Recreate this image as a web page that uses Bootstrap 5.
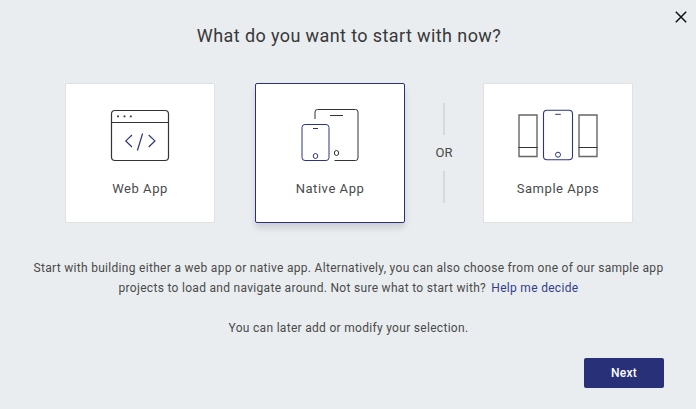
<!DOCTYPE html>
<html lang="en">
<head>
<meta charset="utf-8">
<meta name="viewport" content="width=device-width, initial-scale=1">
<title>Get started</title>
<link href="https://cdn.jsdelivr.net/npm/bootstrap@5.3.0/dist/css/bootstrap.min.css" rel="stylesheet">
<style>
body{background:#e9edf0;font-family:Roboto,sans-serif;color:#4a4a4a;height:409px;overflow:hidden}
.dialog-box{width:696px;height:409px}
.dialog-title{font-size:18px;line-height:24px;letter-spacing:.4px;font-weight:400;color:#383838;padding-top:24px;margin-bottom:35px;padding-left:2px}
.close-x{top:11px;right:9px;width:12px;height:12px}
.options{padding-left:65px}
.option{width:150px;height:140px;border:1px solid #e0e1e2;border-radius:2px;padding-top:24px}
.option.selected{border-color:#293178;box-shadow:0 5px 6px rgba(0,0,0,.12);margin-left:40px}
.option svg{width:84px;height:56px;fill:none;stroke:#333}
.option .accent{stroke:#2b3582}
.option span{font-size:13px;line-height:20px;letter-spacing:.55px;margin-top:15px}
.either{width:78px;font-size:13px;line-height:36px}
.either i{width:2px;height:32px;background:#d4d9dc}
.info{font-size:12px;line-height:20px;letter-spacing:.3px;margin-top:35px;padding-left:1px}
.info p{margin-bottom:20px}
.info a{color:#343d8c;margin-left:2px}
.btn-next{background:#283078;color:#fff;width:80px;height:30px;border-radius:2px;font-size:12px;font-weight:500;line-height:30px;letter-spacing:.3px;margin-right:32px}
.btn-next:hover{background:#202766;color:#fff}
</style>
</head>
<body>
<main class="dialog-box position-relative">
  <button class="close-x btn p-0 border-0 position-absolute d-flex" aria-label="Close">
    <svg width="12" height="12" stroke="#111" stroke-width="1.5"><path d="M.8.8l10.4 10.4M11.2.8.8 11.2"/></svg>
  </button>
  <h1 class="dialog-title text-center">What do you want to start with now?</h1>
  <div class="options d-flex">
    <div class="option bg-white d-flex flex-column align-items-center">
      <svg viewBox="98 108 84 56">
        <rect x="111.500" y="110.500" width="57" height="50" rx="3.5" stroke-width="1.2"/>
        <path d="M111.500 122.500h57"/>
        <path d="M117.100 116.400h1.800M123.600 116.400h1.800M129.900 116.400h1.800" stroke-width="1.900"/>
        <path class="accent" d="M132 135l-6.2 5.9L132 147M142.600 133.500l-5.200 17M148.700 135l6.200 5.900-6.200 6.100" stroke-width="1.200"/>
      </svg>
      <span>Web App</span>
    </div>
    <div class="option selected bg-white d-flex flex-column align-items-center">
      <svg viewBox="288 108 84 56">
        <path d="M315 119v-7q0-2.500 2.500-2.500h38q2.500 0 2.500 2.500v46q0 2.500-2.500 2.500h-21M330 115.500h13"/>
        <ellipse cx="336.500" cy="153" rx="2.200" ry="2.500"/>
        <g class="accent">
          <rect x="302" y="124.500" width="27" height="36" rx="3"/>
          <path d="M313 128.500h5"/>
          <ellipse cx="315.500" cy="156" rx="2.300" ry="2.500"/>
        </g>
      </svg>
      <span>Native App</span>
    </div>
    <div class="either d-flex flex-column align-items-center justify-content-center"><i></i>OR<i></i></div>
    <div class="option bg-white d-flex flex-column align-items-center">
      <svg viewBox="516 108 84 56">
        <path d="M519 115h18v41.500h-18zM579 115h18v41.500h-18z" stroke="#666" stroke-width="1.400"/>
        <path d="M518.500 147.500h19M578.500 147.500h19"/>
        <g class="accent">
          <rect x="543.500" y="110.300" width="29" height="49.400" rx="3.500" stroke-width="1.100"/>
          <path d="M555.200 114.300h5.600"/>
          <circle cx="558" cy="154.700" r="2.500"/>
        </g>
      </svg>
      <span>Sample Apps</span>
    </div>
  </div>
  <div class="info text-center">
    <p>Start with building either a web app or native app. Alternatively, you can also choose from one of our sample app<br>projects to load and navigate around. Not sure what to start with? <a class="text-decoration-none" href="#">Help me decide</a></p>
    <p>You can later add or modify your selection.</p>
  </div>
  <div class="d-flex justify-content-end">
    <button class="btn btn-next border-0 p-0">Next</button>
  </div>
</main>
<script src="https://cdn.jsdelivr.net/npm/bootstrap@5.3.0/dist/js/bootstrap.bundle.min.js"></script>
</body>
</html>
